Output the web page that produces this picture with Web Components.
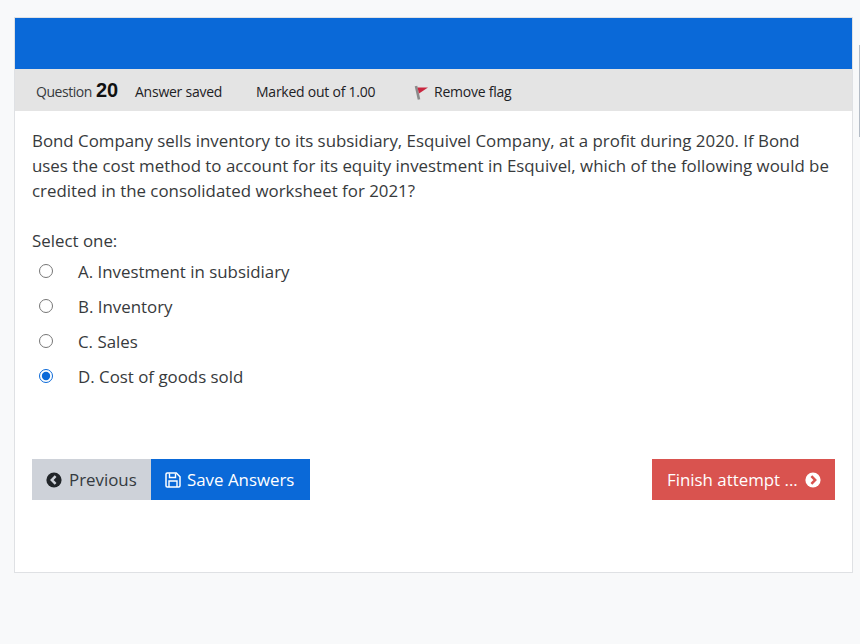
<!DOCTYPE html>
<html>
<head>
<meta charset="utf-8">
<title>Question 20</title>
<style>
  html, body { margin: 0; height: 100%; overflow: hidden; }
  body { background: #f8f9fa; font-family: "Open Sans", sans-serif; color: #373a3c; }
</style>
</head>
<body>
<quiz-page>
  <quiz-card>
    <quiz-info slot="info" number="20"></quiz-info>
    <quiz-question>
      Bond Company sells inventory to its subsidiary, Esquivel Company, at a profit during 2020. If Bond uses the cost method to account for its equity investment in Esquivel, which of the following would be credited in the consolidated worksheet for 2021?
    </quiz-question>
    <quiz-options>
      <quiz-option>A. Investment in subsidiary</quiz-option>
      <quiz-option>B. Inventory</quiz-option>
      <quiz-option>C. Sales</quiz-option>
      <quiz-option checked>D. Cost of goods sold</quiz-option>
    </quiz-options>
    <quiz-nav></quiz-nav>
  </quiz-card>
</quiz-page>

<script>
class QuizPage extends HTMLElement {
  connectedCallback() {
    this.attachShadow({ mode: 'open' });
    this.shadowRoot.innerHTML = `
      <style>
        :host { display: block; padding: 17px 7px 0 14px; position: relative; height: 644px; box-sizing: border-box; }
        .thumb { position: absolute; right: 0; top: 45px; width: 1px; height: 92px; background: #b4bcc6; }
      </style>
      <slot></slot>
      <div class="thumb"></div>
    `;
  }
}

class QuizCard extends HTMLElement {
  connectedCallback() {
    this.attachShadow({ mode: 'open' });
    this.shadowRoot.innerHTML = `
      <style>
        :host { display: block; background: #fff; border: 1px solid #dfe1e4; height: 556px; box-sizing: border-box; }
        .top { height: 51px; background: #0a69d8; }
        .body { padding: 17px 17px 0; }
      </style>
      <div class="top"></div>
      <slot name="info"></slot>
      <div class="body"><slot></slot></div>
    `;
  }
}

class QuizInfo extends HTMLElement {
  connectedCallback() {
    this.attachShadow({ mode: 'open' });
    const num = this.getAttribute('number');
    this.shadowRoot.innerHTML = `
      <style>
        :host { display: flex; align-items: center; height: 42px; background: #e4e4e4; padding: 3px 0 0 21px; box-sizing: border-box; font: 14px "Open Sans", sans-serif; color: #1d2125; letter-spacing: -0.24px; white-space: nowrap; }
        .q { width: 99px; color: #373a3c; display: flex; align-items: center; gap: 4px; letter-spacing: -0.45px; }
        b { font: bold 20px "Liberation Sans", sans-serif; color: #111; letter-spacing: 0; margin-top: -3px; }
        .saved { width: 121px; }
        .marked { width: 158px; }
        .flag { display: flex; align-items: center; gap: 4px; }
        svg { display: block; margin-top: 2px; }
      </style>
      <span class="q">Question <b>${num}</b></span>
      <span class="saved">Answer saved</span>
      <span class="marked">Marked out of 1.00</span>
      <span class="flag">
        <svg width="16" height="16" viewBox="0 0 16 16">
          <path d="M2 1 L5 14.5" stroke="#8a8a8a" stroke-width="2.6" fill="none"/>
          <path d="M3.5 2.5 L14 2.5 L9.5 5.5 L5 8.5 Z" fill="#c9263f"/>
        </svg>
        Remove flag
      </span>
    `;
  }
}

class QuizQuestion extends HTMLElement {
  connectedCallback() {
    this.attachShadow({ mode: 'open' });
    this.shadowRoot.innerHTML = `
      <style>
        :host { display: block; font: 16.86px/25px "Open Sans", sans-serif; color: #373a3c; }
      </style>
      <slot></slot>
    `;
  }
}

class QuizOptions extends HTMLElement {
  connectedCallback() {
    this.attachShadow({ mode: 'open' });
    this.shadowRoot.innerHTML = `
      <style>
        :host { display: block; margin-top: 25px; font: 16.86px/25px "Open Sans", sans-serif; color: #373a3c; }
        .label { height: 26px; }
        .list { display: flex; flex-direction: column; }
      </style>
      <div class="label">Select one:</div>
      <div class="list"><slot></slot></div>
    `;
  }
}

class QuizOption extends HTMLElement {
  connectedCallback() {
    this.attachShadow({ mode: 'open' });
    const checked = this.hasAttribute('checked') ? 'checked' : '';
    this.shadowRoot.innerHTML = `
      <style>
        :host { display: flex; align-items: center; height: 35px; font: 16.86px "Open Sans", sans-serif; color: #373a3c; }
        input { width: 14px; height: 14px; margin: 0 0 2px 7px; accent-color: #0a69d8; }
        span { margin-left: 25px; }
      </style>
      <input type="radio" name="q" ${checked}>
      <span><slot></slot></span>
    `;
  }
}

class QuizNav extends HTMLElement {
  connectedCallback() {
    this.attachShadow({ mode: 'open' });
    this.shadowRoot.innerHTML = `
      <style>
        :host { display: flex; justify-content: space-between; margin-top: 65px; font: 16.86px "Open Sans", sans-serif; }
        .group { display: flex; }
        .btn { display: flex; align-items: center; height: 41px; box-sizing: border-box; white-space: nowrap; }
        .prev { background: #ced2d9; color: #343a40; width: 119px; padding-left: 14px; gap: 7px; }
        .save { background: #0a69d8; color: #fff; width: 159px; padding-left: 14px; gap: 6px; }
        .finish { background: #d9534f; color: #fff; width: 183px; padding-left: 15px; gap: 7px; }
        svg { display: block; flex: none; }
      </style>
      <div class="group">
        <div class="btn prev">
          <svg width="16" height="16" viewBox="0 0 16 16"><circle cx="8" cy="8" r="7.6" fill="#212529"/><path d="M9.6 4.2 L5.8 8 L9.6 11.8" fill="none" stroke="#ced2d9" stroke-width="2.5"/></svg>
          Previous
        </div>
        <div class="btn save">
          <svg width="16" height="16" viewBox="0 0 16 16"><path d="M2.2 1 H11.3 L15 4.7 V13.8 Q15 15 13.8 15 H2.2 Q1 15 1 13.8 V2.2 Q1 1 2.2 1 Z" fill="none" stroke="#fff" stroke-width="1.5"/><path d="M4.5 1.5 V5.5 H10.5 V1.5" fill="none" stroke="#fff" stroke-width="1.4"/><path d="M4 15 V9 H12 V15" fill="none" stroke="#fff" stroke-width="1.4"/></svg>
          Save Answers
        </div>
      </div>
      <div class="btn finish">
        Finish attempt ...
        <svg width="16" height="16" viewBox="0 0 16 16"><circle cx="8" cy="8" r="7.6" fill="#fff"/><path d="M6.4 4.2 L10.2 8 L6.4 11.8" fill="none" stroke="#d9534f" stroke-width="2.5"/></svg>
      </div>
    `;
  }
}

customElements.define('quiz-page', QuizPage);
customElements.define('quiz-card', QuizCard);
customElements.define('quiz-info', QuizInfo);
customElements.define('quiz-question', QuizQuestion);
customElements.define('quiz-options', QuizOptions);
customElements.define('quiz-option', QuizOption);
customElements.define('quiz-nav', QuizNav);
</script>
</body>
</html>
